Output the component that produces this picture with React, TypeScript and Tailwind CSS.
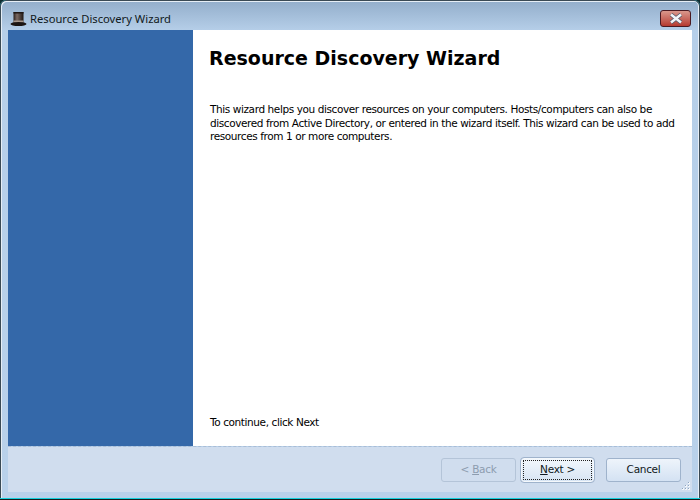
export default function App() {
  const body = { fontFamily: '"DejaVu Sans", sans-serif' };
  return (
    <div className="w-[700px] h-[500px] bg-[#0f2a2e] overflow-hidden">
      <div className="w-full h-full border-b-[1px] border-[#1b1b1b] rounded-t-[6px] bg-[#14d0dc] pb-[1px]">
        <div className="w-full h-full rounded-t-[6px] border-t border-x border-[#3a4a55] shadow-[inset_1px_1px_0_#e6eef6,inset_-1px_0_0_#e6eef6] bg-gradient-to-b from-[#93aecb] from-0% via-[#b6cfe9] via-[6%] to-[#b9d1ea] flex flex-col">
          <div className="h-[29px] flex items-center pl-[9px] pr-[8px] pt-[6px] shrink-0">
            <svg width="17" height="16" viewBox="0 0 17 16" className="mr-[3px]">
              <defs>
                <linearGradient id="hat" x1="0" y1="0" x2="1" y2="0">
                  <stop offset="0" stopColor="#2a1f1c" />
                  <stop offset="0.35" stopColor="#7b6a64" />
                  <stop offset="1" stopColor="#1f1714" />
                </linearGradient>
              </defs>
              <rect x="3.5" y="1" width="10" height="11" fill="url(#hat)" />
              <rect x="3.5" y="1" width="10" height="1.5" fill="#1f1714" />
              <rect x="3.5" y="9.5" width="10" height="2" fill="#a8988c" />
              <ellipse cx="8.5" cy="13" rx="8" ry="2" fill="#1c1512" />
            </svg>
            <span className="text-[11.2px] text-[#101820] leading-none" style={{ fontFamily: '"Noto Sans", sans-serif' }}>Resource Discovery Wizard</span>
            <div className="ml-auto w-[31px] h-[17px] rounded-[3px] border border-[#4a1a22] bg-gradient-to-b from-[#d9978c] from-0% via-[#c86a60] via-50% to-[#b5392f] flex items-center justify-center">
              <svg width="16" height="11" viewBox="0 0 16 11">
                <path d="M3 1.5 L13 9.5 M13 1.5 L3 9.5" stroke="#4d5566" strokeWidth="4" />
                <path d="M3 1.5 L13 9.5 M13 1.5 L3 9.5" stroke="#f2f4f8" strokeWidth="2.6" />
              </svg>
            </div>
          </div>
          <div className="flex-1 mx-[7px] flex flex-col min-h-0 mb-[6px]">
            <div className="flex-1 flex min-h-0 border-b border-dashed border-[#a9bdd6]">
              <div className="w-[185px] bg-[#3468a9] shrink-0" />
              <div className="flex-1 bg-white flex flex-col pl-[17px] pr-[10px] text-black" style={body}>
                <h1 className="text-[19px] font-bold leading-[22px] mt-[17px] -ml-[1px]" style={{ fontFamily: '"DejaVu Sans", sans-serif' }}>Resource Discovery Wizard</h1>
                <p className="text-[10.5px] leading-[13.5px] mt-[34px] tracking-[-0.4px] whitespace-nowrap">
                  This wizard helps you discover resources on your computers. Hosts/computers can also be<br />
                  discovered from Active Directory, or entered in the wizard itself. This wizard can be used to add<br />
                  resources from 1 or more computers.
                </p>
                <p className="text-[10.5px] leading-[13px] mt-auto mb-[17px] tracking-[-0.4px]">To continue, click Next</p>
              </div>
            </div>
            <div className="h-[45px] bg-[#d0ddee] shrink-0 flex items-center justify-end pr-[11px] relative text-[10.5px] tracking-[-0.3px]" style={body}>
              <button className="w-[75px] h-[24px] rounded-[3px] border border-[#b4c4d8] bg-[#d0ddee] text-[#8d9cae]">&lt; <u>B</u>ack</button>
              <button className="w-[73px] h-[24px] rounded-[3px] border border-[#f4f8fc] outline outline-[1px] outline-[#9fb3cc] bg-gradient-to-b from-[#f2f7fc] to-[#d8e5f4] text-[#101820] flex items-center justify-center p-[1px] ml-[5px] mr-[12px]">
                <span className="w-full h-full border border-dotted border-[#222] flex items-center justify-center"><span><u>N</u>ext &gt;</span></span>
              </button>
              <button className="w-[75px] h-[24px] rounded-[3px] border border-[#9fb3cc] bg-gradient-to-b from-[#eef4fb] to-[#d4e2f3] text-[#101820]">Cancel</button>
              <svg width="10" height="10" viewBox="0 0 10 10" className="absolute right-[1px] bottom-[1px]">
                <g fill="#f4f7fb"><rect x="7" y="1" width="2" height="2" /><rect x="4" y="4" width="2" height="2" /><rect x="7" y="4" width="2" height="2" /><rect x="1" y="7" width="2" height="2" /><rect x="4" y="7" width="2" height="2" /><rect x="7" y="7" width="2" height="2" /></g>
                <g fill="#8fa5c0"><rect x="7" y="1" width="1" height="1" /><rect x="4" y="4" width="1" height="1" /><rect x="7" y="4" width="1" height="1" /><rect x="1" y="7" width="1" height="1" /><rect x="4" y="7" width="1" height="1" /><rect x="7" y="7" width="1" height="1" /></g>
              </svg>
            </div>
          </div>
        </div>
      </div>
    </div>
  );
}
